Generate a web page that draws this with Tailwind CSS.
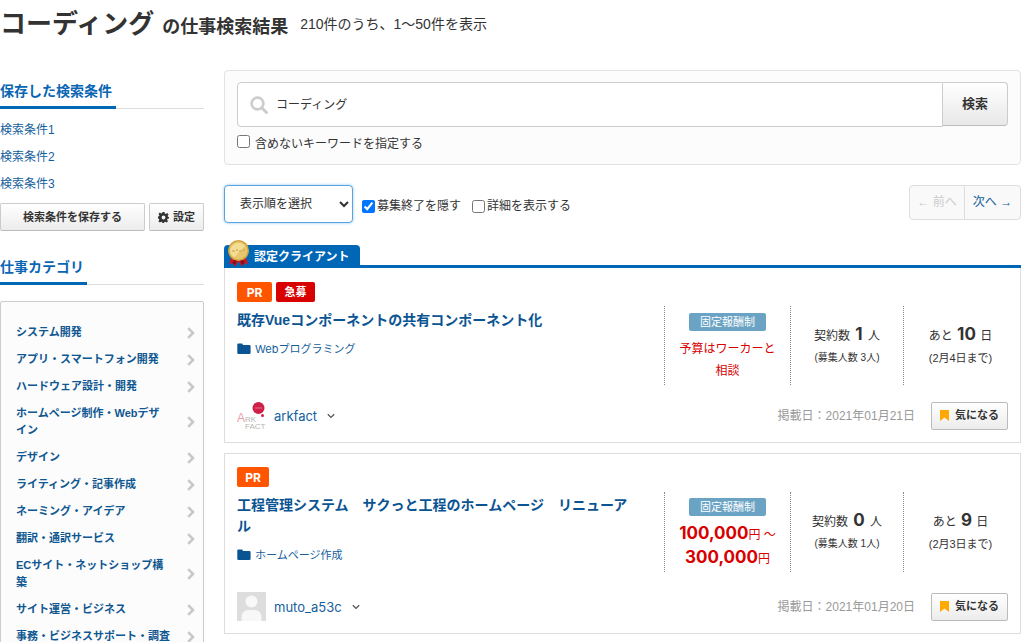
<!DOCTYPE html>
<html lang="ja">
<head>
<meta charset="utf-8">
<meta name="viewport" content="width=device-width, initial-scale=1">
<title>コーディング の仕事検索結果</title>
<script src="https://cdn.jsdelivr.net/npm/@tailwindcss/browser@4"></script>
</head>
<body class="bg-white pr-[3px] font-['Liberation_Sans','Noto_Sans_CJK_JP',sans-serif] text-xs text-[#333]">
<svg class="hidden" aria-hidden="true">
  <symbol id="chevron" viewBox="0 0 8 12"><path d="M1.200 1.200 6 6l-4.800 4.800" fill="none" stroke="#c8c8c8" stroke-width="2.600"/></symbol>
  <symbol id="down" viewBox="0 0 8 6"><path d="M.8 1.200 4 4.400 7.200 1.200" fill="none" stroke="#555" stroke-width="1.300"/></symbol>
  <symbol id="folder" viewBox="0 0 14 12"><path d="M1.200.5h3.600q1 0 1 1v.6h6.600q1.200 0 1.200 1.200v6.500q0 1.200-1.200 1.200H1.500Q.3 11 .3 9.800V1.500q0-1 .9-1z" fill="#0b5493"/></symbol>
  <symbol id="bookmark" viewBox="0 0 9 11"><path d="M0 0h9v11L4.500 7.500 0 11z" fill="#ffa800"/></symbol>
</svg>

<header class="flex h-12 items-center">
  <h1 class="flex items-baseline gap-2 font-bold"><span class="text-[26px] leading-[48px]">コーディング</span><span class="text-lg">の仕事検索結果</span></h1>
  <p class="ml-3 text-sm">210件のうち、1〜50件を表示</p>
</header>

<div class="flex items-start gap-5 pt-[22px]">
  <aside class="w-[204px] shrink-0">
    <h2 class="flex h-[39px] border-b border-[#ddd] text-sm font-bold text-[#0a66b4]"><span class="h-[39px] border-b-3 border-[#0066b6] pr-1 leading-[42px]">保存した検索条件</span></h2>
    <ul class="mt-2 text-[#14609c]">
      <li><a href="#" class="block py-1 leading-[19px]">検索条件1</a></li>
      <li><a href="#" class="block py-1 leading-[19px]">検索条件2</a></li>
      <li><a href="#" class="block py-1 leading-[19px]">検索条件3</a></li>
    </ul>
    <div class="mt-[5px] flex gap-1">
      <button class="h-7 flex-1 rounded-xs border border-[#ccc] border-b-[#bbb] bg-linear-to-b from-white to-[#ececec] text-[11px] font-bold">検索条件を保存する</button>
      <button class="flex h-7 w-[55px] items-center justify-center gap-1 rounded-xs border border-[#ccc] border-b-[#bbb] bg-linear-to-b from-white to-[#ececec] text-[11px] font-bold">
        <svg class="size-[11px]" viewBox="0 0 22 22" aria-hidden="true"><path fill="#333" fill-rule="evenodd" d="M9 0h4l.6 3.200 2 .9 2.800-1.900 2.800 2.800-1.900 2.700.9 2.100L22 9.500v3.500l-2.900.6-.9 2.100 1.800 2.700-2.700 2.700-2.800-1.700-2 .8-.6 2.800H9l-.7-2.900-2-.8-2.700 1.700L.9 18.300l1.700-2.700-.8-2L0 13V9l2-.5.8-2L.9 3.800 3.700 1l2.700 1.800 2-.8zM11 7.200a3.800 3.800 0 1 0 0 7.600 3.800 3.800 0 0 0 0-7.600z"/></svg>設定
      </button>
    </div>

    <h2 class="mt-[15px] flex h-[39px] border-b border-[#ddd] text-sm font-bold text-[#0a66b4]"><span class="h-[39px] border-b-3 border-[#0066b6] pr-[3px] leading-[42px]">仕事カテゴリ</span></h2>
    <nav class="mt-4 rounded-xs border border-[#ccc] bg-[#fcfcfc] pt-[22px] pr-2 pb-5 pl-[15px] text-[11px] leading-[17px] font-bold text-[#0f5791]">
      <ul class="flex flex-col gap-[10px]">
        <li><a href="#" class="flex items-center justify-between"><span class="max-w-[160px]">システム開発</span><svg class="h-3 w-2"><use href="#chevron"/></svg></a></li>
        <li><a href="#" class="flex items-center justify-between"><span class="max-w-[160px]">アプリ・スマートフォン開発</span><svg class="h-3 w-2"><use href="#chevron"/></svg></a></li>
        <li><a href="#" class="flex items-center justify-between"><span class="max-w-[160px]">ハードウェア設計・開発</span><svg class="h-3 w-2"><use href="#chevron"/></svg></a></li>
        <li><a href="#" class="flex items-center justify-between"><span class="max-w-[152px]">ホームページ制作・Webデザイン</span><svg class="h-3 w-2"><use href="#chevron"/></svg></a></li>
        <li><a href="#" class="flex items-center justify-between"><span class="max-w-[160px]">デザイン</span><svg class="h-3 w-2"><use href="#chevron"/></svg></a></li>
        <li><a href="#" class="flex items-center justify-between"><span class="max-w-[160px]">ライティング・記事作成</span><svg class="h-3 w-2"><use href="#chevron"/></svg></a></li>
        <li><a href="#" class="flex items-center justify-between"><span class="max-w-[160px]">ネーミング・アイデア</span><svg class="h-3 w-2"><use href="#chevron"/></svg></a></li>
        <li><a href="#" class="flex items-center justify-between"><span class="max-w-[160px]">翻訳・通訳サービス</span><svg class="h-3 w-2"><use href="#chevron"/></svg></a></li>
        <li><a href="#" class="flex items-center justify-between"><span class="max-w-[152px]">ECサイト・ネットショップ構築</span><svg class="h-3 w-2"><use href="#chevron"/></svg></a></li>
        <li><a href="#" class="flex items-center justify-between"><span class="max-w-[160px]">サイト運営・ビジネス</span><svg class="h-3 w-2"><use href="#chevron"/></svg></a></li>
        <li><a href="#" class="flex items-center justify-between"><span class="max-w-[160px]">事務・ビジネスサポート・調査</span><svg class="h-3 w-2"><use href="#chevron"/></svg></a></li>
      </ul>
    </nav>
  </aside>

  <main class="min-w-0 flex-1">
    <form class="rounded-sm border border-[#e2e2e2] bg-[#fcfcfc] px-3 pt-[11px] pb-[11px]">
      <div class="flex items-start">
        <label class="flex h-[45px] flex-1 items-center gap-2 rounded-l-sm border border-[#ccc] bg-white pl-3">
          <svg class="size-[18px]" viewBox="0 0 18 18" aria-hidden="true"><circle cx="7.500" cy="7.500" r="5.900" fill="none" stroke="#ccc" stroke-width="2.600"/><path d="m12 12 4.500 4.500" stroke="#ccc" stroke-width="3" stroke-linecap="round"/></svg>
          <input type="text" value="コーディング" aria-label="キーワード" class="min-w-0 flex-1 outline-none">
        </label>
        <button type="button" class="h-11 w-[65px] rounded-r-sm border border-l-0 border-[#ccc] border-b-[#bbb] bg-linear-to-b from-white to-[#e8e8e8] text-[13px] font-bold">検索</button>
      </div>
      <label class="mt-2 flex items-start gap-[5px] leading-[18px]"><input type="checkbox" class="size-[13px]">含めないキーワードを指定する</label>
    </form>

    <div class="mt-5 flex items-start">
      <select aria-label="表示順" class="h-[38px] w-[129px] rounded-sm border border-[#5aa5e0] bg-white pl-[11px] shadow-[0_0_3px_#8cc4f0]"><option>表示順を選択</option></select>
      <label class="mt-3 ml-[9px] flex items-center gap-[2px] leading-[18px]"><input type="checkbox" checked class="size-[13px]">募集終了を隠す</label>
      <label class="mt-3 ml-[11px] flex items-center gap-[2px] leading-[18px]"><input type="checkbox" class="size-[13px]">詳細を表示する</label>
      <nav class="ml-auto flex h-[35px] rounded-sm border border-[#ddd] bg-[#f9f9f9] leading-[33px]" aria-label="ページ送り">
        <span class="w-[55px] border-r border-[#ddd] text-center text-[#ccc]">← 前へ</span>
        <a href="#" class="w-[55px] text-center text-[#14609c]">次へ →</a>
      </nav>
    </div>

    <article class="mt-[22px]">
      <div class="flex border-b-3 border-[#0066b6]">
        <div class="relative h-5 w-[136px] rounded-t-sm bg-[#0066b6] pl-[30px] font-bold leading-6 text-white">認定クライアント
          <svg class="absolute -top-[5px] left-1 h-[27px] w-[21px]" viewBox="0 0 21 27" aria-hidden="true">
            <path d="M3.500 16 1 24l3.500-.8L7 26.500l3.500-5 3.500 5 2.500-3.300 3.500.8L17.500 16z" fill="#cf1624"/>
            <path d="m6 19-1.500 4.200L7 25l2-4.500zM12 20.500l2 4.500 2.500-2-1.500-4z" fill="#850c18"/>
            <circle cx="10.500" cy="10.500" r="10.500" fill="#d3a540"/><circle cx="10.500" cy="10.500" r="9" fill="#e8c66b"/>
            <path d="M3 7.500a8.500 8.500 0 0 1 14-1.500L6 17.500A8.500 8.500 0 0 1 3 7.500z" fill="#f3dc93"/>
            <path d="M4 11h3m1-1h2m1 1h3m1-1h2" stroke="#c9a253" stroke-width="1.200"/>
          </svg>
        </div>
      </div>
      <div class="border border-t-0 border-[#ddd] pt-[14px] pr-[3px] pb-3 pl-3">
        <div class="mb-4 flex">
          <div class="min-w-0 flex-1 pr-6">
            <div class="flex h-5 gap-1 text-[11px] font-bold leading-5 text-white"><span class="w-[35px] rounded-xs bg-[#ff5400] text-center font-['Inter'] text-xs leading-[21px]">PR</span><span class="w-[39px] rounded-xs bg-[#d90000] text-center">急募</span></div>
            <h3 class="mt-2 text-sm leading-[21px] font-bold text-[#0b5493]"><a href="#">既存Vueコンポーネントの共有コンポーネント化</a></h3>
            <a href="#" class="mt-[10px] flex items-center gap-1 font-['Inter','Noto_Sans_CJK_JP',sans-serif] text-[11px] leading-4 text-[#14609c]"><svg class="h-3 w-[14px]"><use href="#folder"/></svg>Webプログラミング</a>
          </div>
          <div class="mt-6 flex h-[79px] text-center">
            <div class="w-[126px] border-l border-dotted border-[#888] pt-[7px]">
              <span class="mx-auto block w-[77px] rounded-xs bg-[#6ba3c4] text-[11px] leading-[18px] text-white">固定報酬制</span>
              <p class="px-2 pt-[7px] leading-[22px] text-[#d90000]">予算はワーカーと<br>相談</p>
            </div>
            <div class="w-[113px] border-l border-dotted border-[#888] pt-[17px]">
              <p class="leading-[22px]">契約数 <b class="mx-[2px] font-['Inter'] text-[17px] leading-[22px]">1</b> 人</p><p class="text-[10px] leading-[22px]">(募集人数 3人)</p>
            </div>
            <div class="w-[114px] border-l border-dotted border-[#888] pt-[17px]">
              <p class="leading-[22px]">あと <b class="mx-px font-['Inter'] text-[17px] leading-[22px]">10</b> 日</p><p class="text-[11px] leading-[22px]">(2月4日まで)</p>
            </div>
          </div>
        </div>
        <footer class="flex items-center pr-[9px]">
          <svg class="size-[29px]" viewBox="0 0 29 29" role="img" aria-label="ARK FACT">
            <circle cx="21.500" cy="7" r="6" fill="#cf2049"/><path d="M18 7h7" stroke="#e3738c"/><circle cx="25.500" cy="14.500" r="1.500" fill="#cf2049"/>
            <g font-family="Liberation Sans"><text x="0" y="21" font-size="12" fill="#eba0a6">A</text><text x="8" y="21" font-size="8" fill="#b5b5b5">RK</text><text x="8" y="28" font-size="8" fill="#b5b5b5">FACT</text></g>
          </svg>
          <a href="#" class="ml-2 font-['Inter'] text-[13px] leading-5 text-[#14609c]">arkfact</a>
          <svg class="ml-[10px] h-[6px] w-2"><use href="#down"/></svg>
          <time class="mr-4 ml-auto text-[#999]">掲載日：2021年01月21日</time>
          <button class="flex h-7 w-[77px] items-center justify-center gap-[6px] rounded-xs border border-[#bbb] bg-linear-to-b from-white to-[#ececec] text-[11px] font-bold"><svg class="h-[11px] w-[9px]"><use href="#bookmark"/></svg>気になる</button>
        </footer>
      </div>
    </article>

    <article class="mt-[10px] border border-[#ddd] pt-[13px] pr-[3px] pb-3 pl-3">
      <div class="mb-5 flex">
        <div class="min-w-0 flex-1 pr-6">
          <div class="flex h-5 gap-1 text-xs font-bold leading-[21px] text-white"><span class="w-8 rounded-xs bg-[#ff5400] text-center font-['Inter']">PR</span></div>
          <h3 class="mt-2 text-sm leading-[21px] font-bold text-[#0b5493]"><a href="#">工程管理システム　サクっと工程のホームページ　リニューアル</a></h3>
          <a href="#" class="mt-[10px] flex items-center gap-1 font-['Inter','Noto_Sans_CJK_JP',sans-serif] text-[11px] leading-4 text-[#14609c]"><svg class="h-3 w-[14px]"><use href="#folder"/></svg>ホームページ作成</a>
        </div>
        <div class="mt-[25px] flex h-20 text-center">
          <div class="w-[126px] border-l border-dotted border-[#888] pt-[6px]">
            <span class="mx-auto block w-[77px] rounded-xs bg-[#6ba3c4] text-[11px] leading-[18px] text-white">固定報酬制</span>
            <p class="pt-[6px] leading-[22px] text-[#d90000]"><b class="font-['Inter'] text-[17px] leading-[22px]">100,000</b>円 〜<br><b class="font-['Inter'] text-[17px] leading-[22px]">300,000</b>円</p>
          </div>
          <div class="w-[113px] border-l border-dotted border-[#888] pt-[17px]">
            <p class="leading-[22px]">契約数 <b class="mx-[2px] font-['Inter'] text-[17px] leading-[22px]">0</b> 人</p><p class="text-[10px] leading-[22px]">(募集人数 1人)</p>
          </div>
          <div class="w-[114px] border-l border-dotted border-[#888] pt-[17px]">
            <p class="leading-[22px]">あと <b class="mx-px font-['Inter'] text-[17px] leading-[22px]">9</b> 日</p><p class="text-[11px] leading-[22px]">(2月3日まで)</p>
          </div>
        </div>
      </div>
      <footer class="flex items-center pr-[9px]">
        <svg class="size-[29px]" viewBox="0 0 29 29" role="img" aria-label="muto_a53c"><path d="M0 0h29v29H0z" fill="#ddd"/><circle cx="14.500" cy="9.500" r="6" fill="#f8f8f8"/><path d="M4.500 29v-3q0-8 7-8h6q7 0 7 8v3z" fill="#f8f8f8"/></svg>
        <a href="#" class="ml-2 font-['Inter'] text-[13px] leading-5 text-[#14609c]">muto_a53c</a>
        <svg class="ml-[10px] h-[6px] w-2"><use href="#down"/></svg>
        <time class="mr-4 ml-auto text-[#999]">掲載日：2021年01月20日</time>
        <button class="flex h-7 w-[77px] items-center justify-center gap-[6px] rounded-xs border border-[#bbb] bg-linear-to-b from-white to-[#ececec] text-[11px] font-bold"><svg class="h-[11px] w-[9px]"><use href="#bookmark"/></svg>気になる</button>
      </footer>
    </article>
  </main>
</div>
</body>
</html>
